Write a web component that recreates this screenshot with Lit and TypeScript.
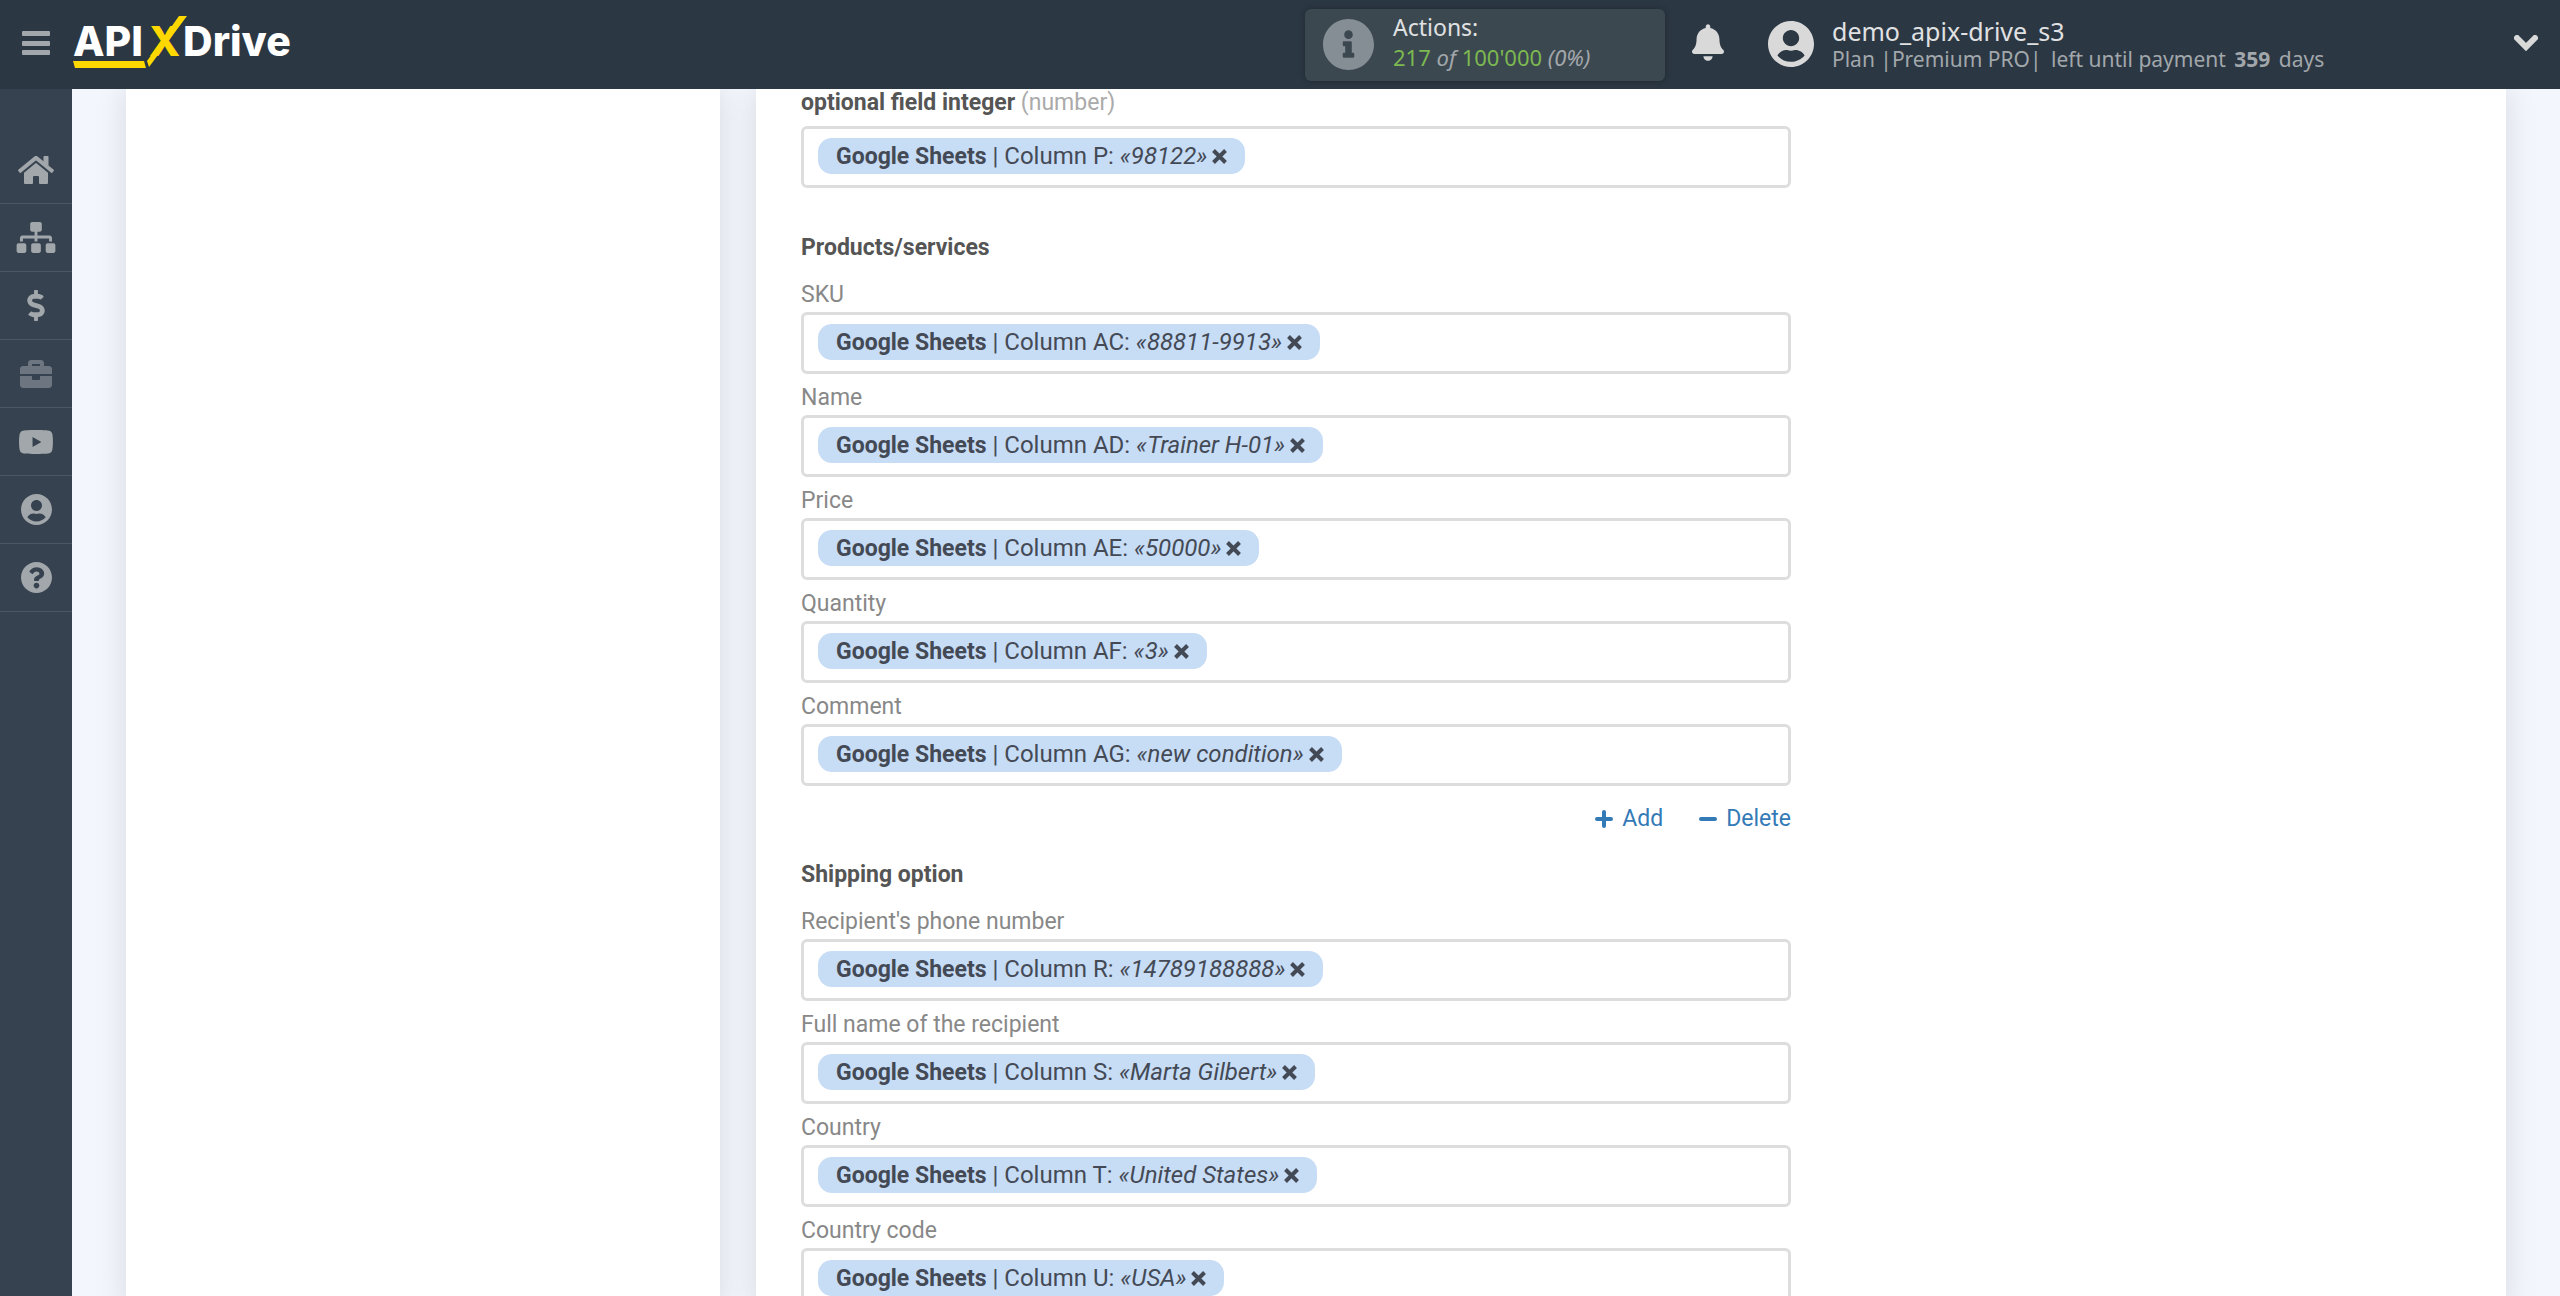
import { LitElement, html, css, svg } from "lit";
import { customElement, property } from "lit/decorators.js";

interface Glyph {
  box: string;
  d: string;
}

const GLYPHS: Record<string, Glyph> = {
  home: {
    box: "0 32 576 448",
    d: "M280.37 148.26L96 300.11V464a16 16 0 0 0 16 16l112.06-.29a16 16 0 0 0 15.92-16V368a16 16 0 0 1 16-16h64a16 16 0 0 1 16 16v95.64a16 16 0 0 0 16 16.05L464 480a16 16 0 0 0 16-16V300L295.67 148.26a12.19 12.19 0 0 0-15.3 0zM571.6 251.47L488 182.56V44.05a12 12 0 0 0-12-12h-56a12 12 0 0 0-12 12v72.61L318.47 43a48 48 0 0 0-61 0L4.34 251.47a12 12 0 0 0-1.6 16.9l25.5 31A12 12 0 0 0 45.15 301l235.22-193.74a12.19 12.19 0 0 1 15.3 0L530.9 301a12 12 0 0 0 16.9-1.6l25.5-31a12 12 0 0 0-1.7-16.93z",
  },
  sitemap: {
    box: "0 0 640 512",
    d: "M128 352H32c-17.67 0-32 14.33-32 32v96c0 17.67 14.33 32 32 32h96c17.67 0 32-14.33 32-32v-96c0-17.67-14.33-32-32-32zm-24-80h192v48h48v-48h192v48h48v-57.59c0-21.17-17.23-38.41-38.41-38.41H344v-64h40c17.67 0 32-14.33 32-32V32c0-17.67-14.33-32-32-32H256c-17.67 0-32 14.33-32 32v96c0 17.67 14.33 32 32 32h40v64H94.41C73.23 224 56 241.23 56 262.41V320h48v-48zm264 80h-96c-17.67 0-32 14.33-32 32v96c0 17.67 14.33 32 32 32h96c17.67 0 32-14.33 32-32v-96c0-17.67-14.33-32-32-32zm240 0h-96c-17.67 0-32 14.33-32 32v96c0 17.67 14.33 32 32 32h96c17.67 0 32-14.33 32-32v-96c0-17.67-14.33-32-32-32z",
  },
  dollar: {
    box: "0 0 288 512",
    d: "M209.2 233.4l-108-31.6C88.7 198.2 80 186.5 80 173.5c0-16.3 13.2-29.5 29.5-29.5h66.3c12.2 0 24.2 3.7 34.2 10.5 6.1 4.1 14.3 3.1 19.5-2l34.8-34c7.1-6.9 6.1-18.4-1.8-24.5C238 74.8 207.4 64.1 176 64V16c0-8.8-7.2-16-16-16h-32c-8.8 0-16 7.2-16 16v48h-2.5C45.8 64-5.4 118.7.5 183.6c4.2 46.1 39.4 83.6 83.8 96.6l102.5 30c12.5 3.7 21.2 15.3 21.2 28.3 0 16.3-13.2 29.5-29.5 29.5h-66.3C100 368 88 364.3 78 357.5c-6.1-4.1-14.3-3.1-19.5 2l-34.8 34c-7.1 6.9-6.1 18.4 1.8 24.5 24.5 19.2 55.1 29.9 86.5 30v48c0 8.8 7.2 16 16 16h32c8.8 0 16-7.2 16-16v-48.2c46.6-.9 90.3-28.6 105.7-72.7 21.5-61.6-14.6-124.8-72.5-141.7z",
  },
  briefcase: {
    box: "0 32 512 448",
    d: "M320 336c0 8.84-7.16 16-16 16h-96c-8.84 0-16-7.16-16-16v-48H0v144c0 25.6 22.4 48 48 48h416c25.6 0 48-22.4 48-48V288H320v48zm144-208h-80V80c0-25.6-22.4-48-48-48H176c-25.6 0-48 22.4-48 48v48H48c-25.6 0-48 22.4-48 48v80h512v-80c0-25.6-22.4-48-48-48zm-144 0H192V96h128v32z",
  },
  video: {
    box: "14 64 548 384",
    d: "M549.655 124.083c-6.281-23.65-24.787-42.276-48.284-48.597C458.781 64 288 64 288 64S117.22 64 74.629 75.486c-23.497 6.322-42.003 24.947-48.284 48.597-11.412 42.867-11.412 132.305-11.412 132.305s0 89.438 11.412 132.305c6.281 23.65 24.787 41.5 48.284 47.821C117.22 448 288 448 288 448s170.78 0 213.371-11.486c23.497-6.321 42.003-24.171 48.284-47.821 11.412-42.867 11.412-132.305 11.412-132.305s0-89.438-11.412-132.305zm-317.51 213.508V175.185l142.739 81.205-142.739 81.201z",
  },
  user: {
    box: "0 8 496 496",
    d: "M248 8C111 8 0 119 0 256s111 248 248 248 248-111 248-248S385 8 248 8zm0 96c48.6 0 88 39.4 88 88s-39.4 88-88 88-88-39.4-88-88 39.4-88 88-88zm0 344c-58.7 0-111.3-26.6-146.5-68.2 18.8-35.4 55.6-59.8 98.5-59.8 2.4 0 4.8.4 7.1 1.1 13 4.2 26.6 6.9 40.9 6.9 14.3 0 28-2.7 40.9-6.9 2.3-.7 4.7-1.1 7.1-1.1 42.9 0 79.7 24.4 98.5 59.8C359.3 421.4 306.7 448 248 448z",
  },
  question: {
    box: "8 8 496 496",
    d: "M504 256c0 136.997-111.043 248-248 248S8 392.997 8 256C8 119.083 119.043 8 256 8s248 111.083 248 248zM262.655 90c-54.497 0-89.255 22.957-116.549 63.758-3.536 5.286-2.353 12.415 2.715 16.258l34.699 26.31c5.205 3.947 12.621 3.008 16.665-2.122 17.864-22.658 30.113-35.797 57.303-35.797 20.429 0 45.698 13.148 45.698 32.958 0 14.976-12.363 22.667-32.534 33.976C247.128 238.528 216 254.941 216 296v4c0 6.627 5.373 12 12 12h56c6.627 0 12-5.373 12-12v-1.333c0-28.462 83.186-29.647 83.186-106.667 0-58.002-60.165-102-116.531-102zM256 338c-25.365 0-46 20.635-46 46 0 25.364 20.635 46 46 46s46-20.636 46-46c0-25.365-20.635-46-46-46z",
  },
  info: {
    box: "8 8 496 496",
    d: "M256 8C119.043 8 8 119.083 8 256c0 136.997 111.043 248 248 248s248-111.003 248-248C504 119.083 392.957 8 256 8zm0 110c23.196 0 42 18.804 42 42s-18.804 42-42 42-42-18.804-42-42 18.804-42 42-42zm56 254c0 6.627-5.373 12-12 12h-88c-6.627 0-12-5.373-12-12v-24c0-6.627 5.373-12 12-12h12v-64h-12c-6.627 0-12-5.373-12-12v-24c0-6.627 5.373-12 12-12h64c6.627 0 12 5.373 12 12v100h12c6.627 0 12 5.373 12 12v24z",
  },
  bell: {
    box: "0 0 448 512",
    d: "M224 512c35.32 0 63.97-28.65 63.97-64H160.03c0 35.35 28.65 64 63.97 64zm215.39-149.71c-19.32-20.76-55.47-51.99-55.47-154.29 0-77.7-54.48-139.9-127.94-155.16V32c0-17.67-14.32-32-31.98-32s-31.98 14.33-31.98 32v20.84C118.56 68.1 64.08 130.3 64.08 208c0 102.3-36.15 133.53-55.47 154.29-6 6.45-8.66 14.16-8.61 21.71.11 16.4 12.98 32 32.1 32h383.8c19.12 0 32-15.6 32.1-32 .05-7.55-2.61-15.27-8.61-21.71z",
  },
};

const glyph = (name: string, width: number, height: number) => html`
  <svg width=${width} height=${height} viewBox=${GLYPHS[name].box} fill="currentColor" aria-hidden="true">
    ${svg`<path d=${GLYPHS[name].d} />`}
  </svg>
`;

@customElement("side-nav")
export class SideNav extends LitElement {
  static styles = css`
    :host {
      display: block;
      background: #36424f;
      padding-top: 47px;
    }
    .list {
      list-style: none;
      margin: 0;
      padding: 0;
    }
    .link {
      box-sizing: border-box;
      height: 68px;
      display: flex;
      align-items: center;
      justify-content: center;
      border-bottom: 1px solid #4b5763;
      color: #a2a7ab;
    }
    .link.dim {
      color: #6d7680;
    }
    svg {
      display: block;
    }
  `;

  private items = [
    { name: "Home", icon: "home", w: 36, h: 28 },
    { name: "Connections", icon: "sitemap", w: 40, h: 31 },
    { name: "Billing", icon: "dollar", w: 18, h: 31 },
    { name: "Business", icon: "briefcase", w: 32, h: 28, dim: true },
    { name: "Videos", icon: "video", w: 34, h: 24 },
    { name: "Profile", icon: "user", w: 31, h: 31 },
    { name: "Help", icon: "question", w: 31, h: 31 },
  ];

  render() {
    return html`
      <ul class="list">
        ${this.items.map(
          (i) => html`<li>
            <a class="link ${i.dim ? "dim" : ""}" href="#" aria-label=${i.name}>${glyph(i.icon, i.w, i.h)}</a>
          </li>`
        )}
      </ul>
    `;
  }
}

@customElement("top-bar")
export class TopBar extends LitElement {
  static styles = css`
    :host {
      display: flex;
      align-items: center;
      height: 89px;
      background: #2b3743;
      font-family: "Noto Sans", "Open Sans", sans-serif;
      color: #e0e1e2;
    }
    svg {
      display: block;
    }
    .icon-button {
      display: flex;
      align-items: center;
      justify-content: center;
      margin: 0;
      padding: 0 0 4px;
      border: 0;
      background: none;
      color: #d9d9d9;
      cursor: pointer;
    }
    .menu {
      width: 72px;
      height: 89px;
      color: #a2a7ab;
    }
    .logo {
      font-family: Inter, "Open Sans", sans-serif;
      font-weight: 800;
      font-size: 41px;
      padding-bottom: 5px;
    }
    .spacer {
      flex: 1;
    }
    .usage {
      box-sizing: border-box;
      width: 360px;
      height: 72px;
      display: flex;
      align-items: center;
      gap: 19px;
      padding: 0 18px;
      border-radius: 6px;
      background: #3c4850;
      box-shadow: 0 0 6px rgba(0, 0, 0, 0.25);
      color: #868e95;
    }
    .usage-title {
      font-size: 23px;
      line-height: 28px;
      color: #e0e1e2;
    }
    .usage-value {
      font-size: 22px;
      line-height: 32px;
      padding-bottom: 4px;
      color: #a2a7ab;
    }
    .green {
      color: #7cb950;
    }
    .bell {
      width: 86px;
      height: 89px;
      margin-right: 17px;
    }
    .account {
      width: 746px;
      display: flex;
      align-items: center;
      gap: 18px;
      text-align: left;
    }
    .avatar {
      color: #d9d9d9;
      padding-bottom: 2px;
    }
    .name {
      font-size: 25px;
      line-height: 28px;
    }
    .plan {
      font-size: 21px;
      line-height: 28px;
      color: #a2a7ab;
    }
    .tier {
      margin-right: 4px;
    }
    .plan b {
      margin: 0 3px;
    }
    .chevron {
      padding-right: 22px;
      height: 89px;
    }
  `;

  render() {
    return html`
      <button class="icon-button menu" aria-label="Menu">
        <svg width="28" height="24" viewBox="0 0 28 24" fill="currentColor">
          <rect width="28" height="5" rx="1" />
          <rect y="10" width="28" height="5" rx="1" />
          <rect y="19" width="28" height="5" rx="1" />
        </svg>
      </button>
      <a class="logo" href="#" aria-label="ApiX-Drive">
        <svg width="222" height="56" viewBox="0 0 222 56">
          <text x="1" y="42" fill="#ffffff">API</text>
          <text x="77" y="42" fill="#ffd800">X</text>
          <text x="111" y="42" fill="#ffffff">Drive</text>
          <polygon points="107,2 115,2 77,53 75,47" fill="#ffd800" />
          <polygon points="1,47 72,47 74,54 3,54" fill="#ffd800" />
        </svg>
      </a>
      <div class="spacer"></div>
      <div class="usage">
        ${glyph("info", 51, 51)}
        <div>
          <div class="usage-title">Actions:</div>
          <div class="usage-value">
            <span class="green">217</span> <i>of</i> <span class="green">100'000</span> <i>(0%)</i>
          </div>
        </div>
      </div>
      <button class="icon-button bell" aria-label="Notifications">${glyph("bell", 32, 37)}</button>
      <div class="account">
        <div class="avatar">${glyph("user", 46, 46)}</div>
        <div>
          <div class="name">demo_apix-drive_s3</div>
          <div class="plan">Plan <span class="tier">|Premium PRO|</span> left until payment <b>359</b> days</div>
        </div>
      </div>
      <button class="icon-button chevron" aria-label="Open account menu">
        <svg width="24" height="16" viewBox="0 0 24 16" fill="none" stroke="currentColor" stroke-width="6" stroke-linecap="round" stroke-linejoin="miter">
          <path d="M3 3L12 12L21 3" />
        </svg>
      </button>
    `;
  }
}

@customElement("tag-field")
export class TagField extends LitElement {
  @property() label = "";
  @property() hint = "";
  @property() column = "";
  @property() value = "";
  @property({ type: Boolean }) strong = false;

  static styles = css`
    :host {
      display: block;
    }
    .label {
      display: block;
      font-size: 23px;
      line-height: 28px;
      padding: 10px 0 3px;
      color: #888888;
    }
    .label.strong {
      padding: 0 0 9px;
      color: #aaaaaa;
    }
    .label b {
      color: #555555;
    }
    .box {
      box-sizing: border-box;
      height: 62px;
      display: flex;
      align-items: flex-start;
      padding: 9px 14px;
      border: 3px solid #dddddd;
      border-radius: 6px;
      background: #ffffff;
    }
    .tag {
      flex: none;
      height: 36px;
      display: flex;
      align-items: center;
      gap: 5px;
      padding: 0 18px;
      border-radius: 14px;
      background: #c7dcf5;
      color: #444a55;
      font-size: 24px;
      line-height: 36px;
      white-space: nowrap;
    }
    .tag b {
      font-size: 23px;
    }
    .remove {
      display: flex;
      margin: 0;
      padding: 0;
      border: 0;
      background: none;
      color: inherit;
      cursor: pointer;
    }
    .entry {
      flex: 1;
      min-width: 0;
      height: 36px;
      padding: 0 8px;
      border: 0;
      outline: 0;
      background: none;
      font: inherit;
      font-size: 24px;
    }
  `;

  render() {
    return html`
      <label class="label ${this.strong ? "strong" : ""}" for="entry"
        >${this.strong ? html`<b>${this.label}</b>` : this.label}${this.hint ? ` ${this.hint}` : ""}</label
      >
      <div class="box">
        <div class="tag">
          <span><b>Google Sheets</b> | Column ${this.column}: <i>«${this.value}»</i></span>
          <button class="remove" aria-label="Remove">
            <svg width="15" height="15" viewBox="0 0 15 15" fill="none" stroke="currentColor" stroke-width="4">
              <path d="M1.500 1.500L13.500 13.500M13.500 1.500L1.500 13.500" />
            </svg>
          </button>
        </div>
        <input id="entry" class="entry" type="text" />
      </div>
    `;
  }
}

const PRODUCT_FIELDS = [
  ["SKU", "AC", "88811-9913"],
  ["Name", "AD", "Trainer H-01"],
  ["Price", "AE", "50000"],
  ["Quantity", "AF", "3"],
  ["Comment", "AG", "new condition"],
];

const SHIPPING_FIELDS = [
  ["Recipient's phone number", "R", "14789188888"],
  ["Full name of the recipient", "S", "Marta Gilbert"],
  ["Country", "T", "United States"],
  ["Country code", "U", "USA"],
];

@customElement("app-root")
export class AppRoot extends LitElement {
  static styles = css`
    :host {
      display: grid;
      grid-template: auto minmax(0, 1fr) / 72px minmax(0, 1fr);
      height: 100vh;
      font-family: Roboto, "Liberation Sans", sans-serif;
      font-size: 23px;
      line-height: 28px;
    }
    .top {
      grid-column: 1 / -1;
    }
    .main {
      display: grid;
      grid-template-columns: 594fr 1750fr;
      gap: 36px;
      padding: 0 54px;
      background: #f3f6fc;
      overflow: hidden;
    }
    .panel {
      background: #ffffff;
      box-shadow: 0 0 30px rgba(0, 0, 0, 0.12);
    }
    .form {
      padding: 0 45px;
    }
    .fields {
      max-width: 990px;
    }
    .heading {
      margin: 46px 0 9px;
      font-size: 23px;
      line-height: 28px;
      font-weight: 700;
      color: #555555;
    }
    .actions {
      display: flex;
      justify-content: flex-end;
      gap: 36px;
      margin-top: 19px;
    }
    .actions + .heading {
      margin-top: 28px;
    }
    .action {
      display: flex;
      align-items: center;
      gap: 9px;
      margin: 0;
      padding: 0;
      border: 0;
      background: none;
      color: #337ab7;
      font: inherit;
      cursor: pointer;
    }
  `;

  private rows(fields: string[][]) {
    return fields.map(([label, column, value]) => html`<tag-field .label=${label} .column=${column} .value=${value}></tag-field>`);
  }

  render() {
    return html`
      <top-bar class="top"></top-bar>
      <side-nav></side-nav>
      <main class="main">
        <aside class="panel"></aside>
        <section class="panel form">
          <div class="fields">
            <tag-field strong label="optional field integer" hint="(number)" column="P" value="98122"></tag-field>
            <h2 class="heading">Products/services</h2>
            ${this.rows(PRODUCT_FIELDS)}
            <div class="actions">
              <button class="action">
                <svg width="18" height="18" viewBox="0 0 18 18" stroke="currentColor" stroke-width="4" stroke-linecap="round">
                  <path d="M9 2V16M2 9H16" />
                </svg>
                Add
              </button>
              <button class="action">
                <svg width="18" height="18" viewBox="0 0 18 18" stroke="currentColor" stroke-width="4" stroke-linecap="round">
                  <path d="M2 9H16" />
                </svg>
                Delete
              </button>
            </div>
            <h2 class="heading">Shipping option</h2>
            ${this.rows(SHIPPING_FIELDS)}
          </div>
        </section>
      </main>
    `;
  }
}
